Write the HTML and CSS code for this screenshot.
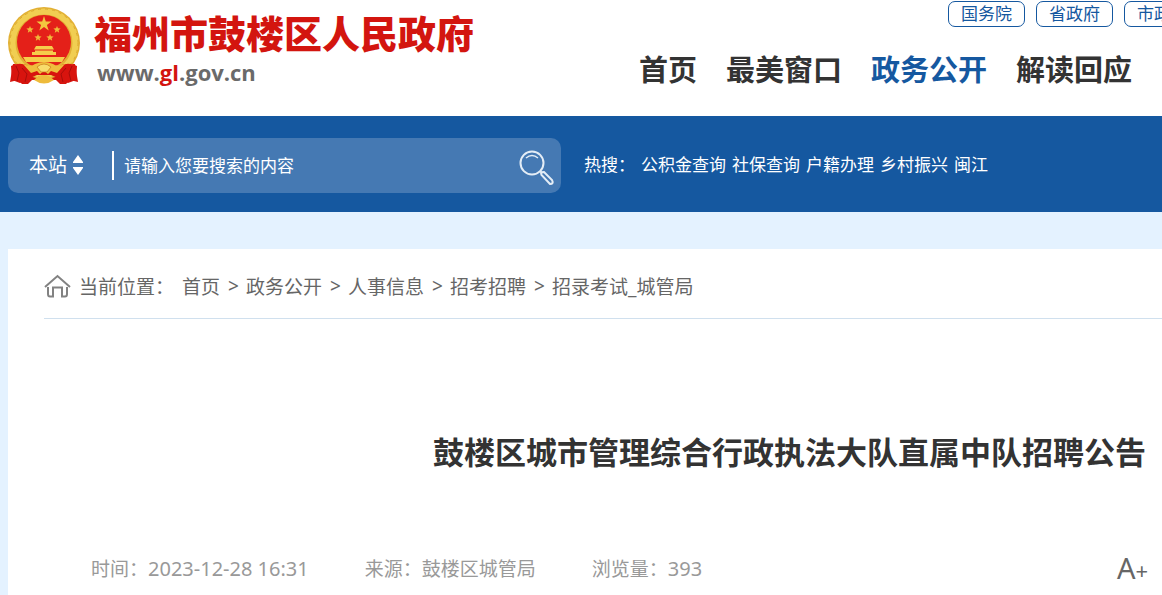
FILE: index.html
```html
<!doctype html>
<html lang="zh-CN">
  <head>
    <meta charset="UTF-8" />
    <meta name="viewport" content="width=device-width, initial-scale=1.0" />
    <link rel="stylesheet" href="styles.css">
    <title>鼓楼区城市管理综合行政执法大队直属中队招聘公告</title>
  </head>
  <body>
    <header class="header">
      <a class="logo" href="#">
        <svg class="emblem" viewBox="0 0 72 78" aria-hidden="true">
          <path d="M5 57 2 75 10 73 14 77 20 77 24 73H48L52 77 58 77 62 73 70 75 67 57Z" fill="#d5150f" />
          <circle cx="36" cy="36" r="36" fill="#e2b034" />
          <circle cx="36" cy="36" r="31.500" fill="none" stroke="#f1ce52" stroke-width="6" />
          <circle cx="36" cy="36" r="34" fill="none" stroke="#dca82f" stroke-dasharray="3 4" />
          <circle cx="36" cy="35" r="27" fill="#e42019" />
          <path d="M36 9 37.800 14.500H43.500L38.900 17.900 40.700 23.400 36 20 31.300 23.400 33.100 17.900 28.500 14.500H34.200Z" fill="#f3c63f" />
          <g fill="#f0b93a">
            <path d="m22 19 1 2.300 2.600.2-2 1.700.6 2.500-2.200-1.400-2.200 1.400.6-2.500-2-1.700 2.600-.2Z" />
            <path d="m49 19 1 2.300 2.600.2-2 1.700.6 2.500-2.200-1.400-2.200 1.400.6-2.500-2-1.700 2.600-.2Z" />
            <path d="m30 27 1 2.300 2.600.2-2 1.700.6 2.500-2.200-1.400-2.200 1.400.6-2.500-2-1.700 2.600-.2Z" />
            <path d="m42 27 1 2.300 2.600.2-2 1.700.6 2.500-2.200-1.400-2.200 1.400.6-2.500-2-1.700 2.600-.2Z" />
          </g>
          <path d="M28 39H44L46 42.500H26ZM27 43.500H45V45H48V48H24V45H27ZM15 50H57L54 55H18Z" fill="#f6cd4b" />
          <path d="M3 59Q13 54 22 60L31 62 36 65 41 62 50 60Q59 54 69 59L68 73 60 76 50 71 43 68H29L22 71 12 76 4 73Z" fill="#d8140e" />
          <path d="M15 57Q23 60 27 57Q36 53 45 57Q49 60 57 57L49 66 43 64 40 67 36 64 32 67 29 64 23 66Z" fill="#efbd3d" />
          <path d="M29 60Q36 54 43 60L39 65H33Z" fill="#f8dc6c" stroke="#c77718" stroke-width=".7" />
          <path d="M26 73Q36 63 46 73Q36 80 26 73Z" fill="#eebb3b" />
          <path d="M8 59 11 66 9 74M64 59 61 66 63 74M14 61 19 67 17 75M58 61 53 67 55 75" fill="none" stroke="#a90e0a" />
        </svg>
        <span class="logo-text">
          <span class="logo-name">福州市鼓楼区人民政府</span>
          <span class="logo-url">www.<em>gl</em>.gov.cn</span>
        </span>
      </a>
      <div class="header-right">
        <div class="gov-links">
          <a href="#">国务院</a>
          <a href="#">省政府</a>
          <a href="#">市政府</a>
        </div>
        <nav class="nav">
          <a href="#">首页</a>
          <a href="#">最美窗口</a>
          <a class="active" href="#">政务公开</a>
          <a href="#">解读回应</a>
        </nav>
      </div>
    </header>

    <div class="search-bar">
      <form class="search">
        <label class="scope">
          <select aria-label="搜索范围">
            <option>本站</option>
          </select>
          <svg width="10" height="20" viewBox="0 0 10 20" aria-hidden="true">
            <path d="M5 0 10 7V8H0V7ZM0 12H10V13L5 20 0 13Z" fill="#fff" />
          </svg>
        </label>
        <input type="text" placeholder="请输入您要搜索的内容" aria-label="搜索内容" />
        <button type="submit" aria-label="搜索">
          <svg width="36" height="36" viewBox="0 0 36 36" fill="none" stroke="#e4edf6" stroke-width="2" aria-hidden="true">
            <circle cx="13" cy="13" r="11.500" />
            <path d="M7 8Q13 3 19 8" stroke-width="1.500" />
            <path d="m21 21 2 2" />
            <path d="M22.500 25Q21 22 25 22L33 30Q35 34 31 34Z" />
          </svg>
        </button>
      </form>
      <div class="hot">
        <span class="hot-label">热搜：</span>
        <a href="#">公积金查询</a>
        <a href="#">社保查询</a>
        <a href="#">户籍办理</a>
        <a href="#">乡村振兴</a>
        <a href="#">闽江</a>
      </div>
    </div>

    <main class="content">
      <nav class="breadcrumb">
        <svg width="27" height="24" viewBox="0 0 27 24" fill="none" stroke="#828282" stroke-width="2" aria-hidden="true">
          <path d="M1 13 13.500 2 26 13" />
          <path d="M4 13V20Q4 22.500 6 22.500H9V13.500H18V22.500H21Q23 22.500 23 20V13" />
        </svg>
        <span class="here">当前位置：</span>
        <a href="#">首页</a>
        <span class="sep">&gt;</span>
        <a href="#">政务公开</a>
        <span class="sep">&gt;</span>
        <a href="#">人事信息</a>
        <span class="sep">&gt;</span>
        <a href="#">招考招聘</a>
        <span class="sep">&gt;</span>
        <a href="#">招录考试_城管局</a>
      </nav>

      <article>
        <h1>鼓楼区城市管理综合行政执法大队直属中队招聘公告</h1>
        <div class="meta">
          <span>时间：<time datetime="2023-12-28T16:31">2023-12-28 16:31</time></span>
          <span>来源：鼓楼区城管局</span>
          <span>浏览量：<span class="views">393</span></span>
          <button type="button" aria-label="放大字体">A<small>+</small></button>
        </div>
      </article>
    </main>
  </body>
</html>
```
FILE: styles.css
```css
* {
  box-sizing: border-box;
}

html,
body {
  min-height: 100%;
  margin: 0;
}

body {
  background: #e4f2ff;
  color: #333;
  font-family: "Noto Sans", "Noto Sans CJK SC", sans-serif;
  font-size: 19px;
  white-space: nowrap;
  overflow-x: hidden;
}

a {
  color: inherit;
  text-decoration: none;
}

svg {
  display: block;
  flex: none;
}

/* Header */
.header {
  display: flex;
  justify-content: space-between;
  height: 116px;
  padding: 0 30px 0 8px;
  background: #fff;
  overflow: hidden;
}

.logo {
  display: flex;
  gap: 14px;
  padding-top: 7px;
}

.emblem {
  width: 72px;
  height: 78px;
}

.logo-text {
  display: flex;
  flex-direction: column;
}

.logo-name {
  color: #d3150f;
  font-family: "Noto Sans CJK SC", sans-serif;
  font-size: 38px;
  font-weight: 900;
  line-height: 50px;
}

.logo-url {
  padding-left: 3px;
  color: #6a6a6a;
  font-family: "Open Sans", sans-serif;
  font-size: 22px;
  font-weight: 700;
  line-height: 30px;
}

.logo-url em {
  color: #d3150f;
  font-style: normal;
}

.header-right {
  width: 493px;
}

/* Runs on past the nav, the header clips it */
.gov-links {
  display: flex;
  gap: 11px;
  padding: 1px 0 0 309px;
}

.gov-links a {
  flex: none;
  padding: 0 12px;
  border: 1px solid #1558a0;
  border-radius: 7px;
  color: #1558a0;
  font-size: 17px;
  line-height: 24px;
}

.nav {
  display: flex;
  justify-content: space-between;
  padding-top: 22px;
  font-size: 29px;
  font-weight: 700;
  line-height: 42px;
}

.nav .active {
  color: #1558a0;
}

/* Search */
.search-bar {
  display: flex;
  align-items: center;
  gap: 23px;
  height: 96px;
  padding: 2px 8px 0;
  background: #1558a0;
  color: #fff;
  font-size: 17px;
}

.search {
  display: flex;
  align-items: center;
  width: 553px;
  height: 55px;
  padding: 0 6px 0 21px;
  border-radius: 10px;
  background: #4579b3;
}

.scope {
  display: flex;
  align-items: center;
  gap: 5px;
  width: 85px;
  height: 29px;
  border-right: 2px solid #fff;
}

.search select,
.search input,
.search button {
  padding: 0;
  border: 0;
  background: none;
  color: #fff;
  font: inherit;
  appearance: none;
}

.search select {
  font-size: 19px;
}

.search input {
  flex: 1;
  min-width: 0;
  margin-left: 10px;
}

.search button {
  padding-top: 5px;
}

.search input::placeholder {
  color: #fff;
}

.hot {
  display: flex;
  gap: 6px;
  line-height: 24px;
}

/* Article */
.content {
  min-height: 346px;
  margin: 37px 0 0 8px;
  padding-left: 36px;
  background: #fff;
}

.breadcrumb {
  display: flex;
  align-items: center;
  gap: 8px;
  height: 70px;
  padding-top: 5px;
  border-bottom: 1px solid #d0e0ee;
  color: #666;
}

.sep {
  width: 10px;
  font-size: 19px;
}

h1 {
  margin: 109px 16px 0 0;
  font-size: 31px;
  line-height: 48px;
  text-align: right;
}

.meta {
  display: flex;
  align-items: center;
  gap: 56px;
  height: 40px;
  margin-top: 73px;
  padding: 0 14px 0 47px;
  color: #999;
  line-height: 40px;
}

.meta time,
.meta .views {
  font-size: 20px;
}

.meta button {
  margin-left: auto;
  padding: 0;
  border: 0;
  background: none;
  color: #666;
  font: inherit;
  font-size: 29px;
  line-height: 40px;
}

.meta small {
  font-size: 22px;
}
```
